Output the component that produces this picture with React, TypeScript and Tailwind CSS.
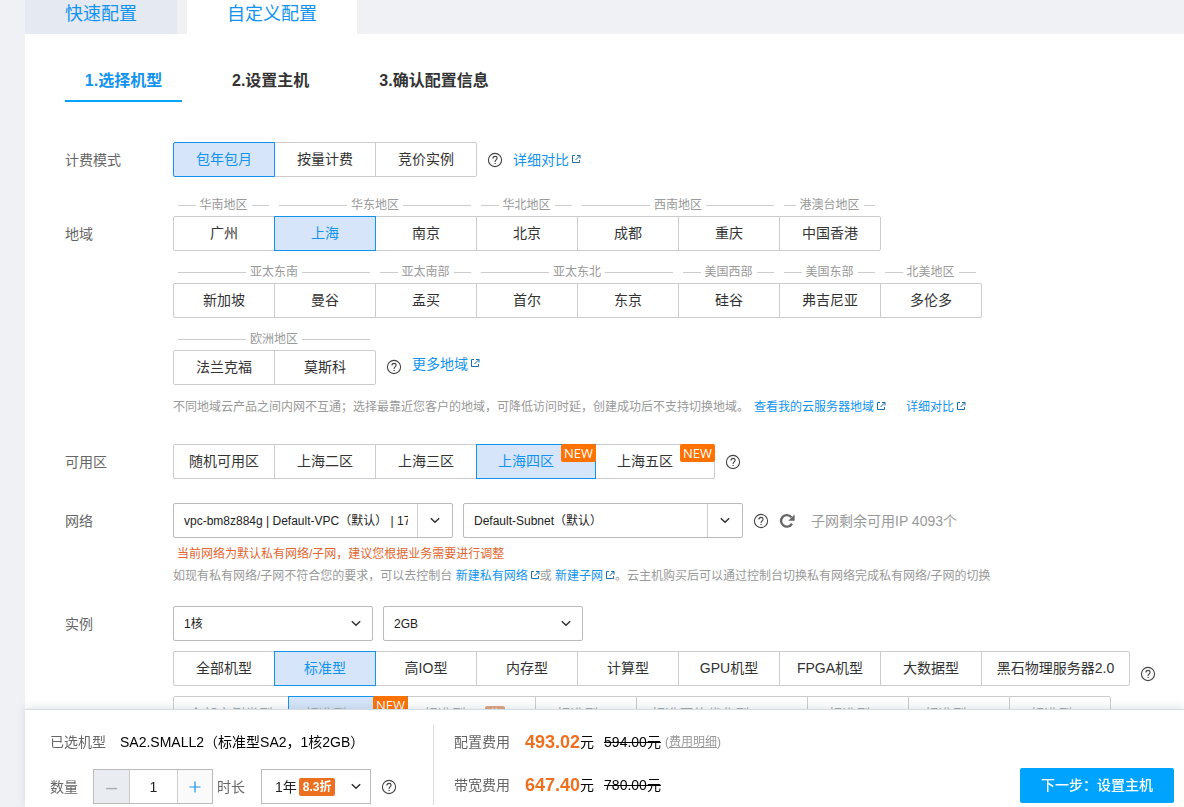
import { clsx } from "clsx";

interface Option {
    name: string;
    badge?: string;
    width?: string;
}

interface Region {
    area: string;
    cities: Array<string>;
}

const regionRows: Array<Array<Region>> = [
    [
        { area: "华南地区", cities: ["广州"] },
        { area: "华东地区", cities: ["上海", "南京"] },
        { area: "华北地区", cities: ["北京"] },
        { area: "西南地区", cities: ["成都", "重庆"] },
        { area: "港澳台地区", cities: ["中国香港"] },
    ],
    [
        { area: "亚太东南", cities: ["新加坡", "曼谷"] },
        { area: "亚太南部", cities: ["孟买"] },
        { area: "亚太东北", cities: ["首尔", "东京"] },
        { area: "美国西部", cities: ["硅谷"] },
        { area: "美国东部", cities: ["弗吉尼亚"] },
        { area: "北美地区", cities: ["多伦多"] },
    ],
    [{ area: "欧洲地区", cities: ["法兰克福", "莫斯科"] }],
];

const payModes: Array<Option> = [{ name: "包年包月" }, { name: "按量计费" }, { name: "竞价实例" }];

const zones: Array<Option> = [
    { name: "随机可用区" },
    { name: "上海二区" },
    { name: "上海三区" },
    { name: "上海四区", badge: "NEW", width: "w-[120px]" },
    { name: "上海五区", badge: "NEW", width: "w-[120px]" },
];

const families: Array<Option> = [
    { name: "全部机型" },
    { name: "标准型" },
    { name: "高IO型" },
    { name: "内存型" },
    { name: "计算型" },
    { name: "GPU机型" },
    { name: "FPGA机型" },
    { name: "大数据型" },
    { name: "黑石物理服务器2.0", width: "w-[149px]" },
];

const models: Array<Option> = [
    { name: "全部实例类型", width: "w-[116px]" },
    { name: "标准型SA2", badge: "NEW", width: "w-[120px]" },
    { name: "标准型S5", badge: "HOT", width: "w-[129px]" },
    { name: "标准型S4" },
    { name: "标准网络优化型SN3ne", width: "w-[172px]" },
    { name: "标准型S3" },
    { name: "标准型SA1" },
    { name: "标准型S2" },
];

const HelpIcon: React.FC = () => (
    <svg className="size-4 shrink-0 text-[#444]" viewBox="0 0 16 16" fill="none" stroke="currentColor" strokeWidth="1.1">
        <circle cx="8" cy="8" r="6.6" />
        <path d="M5.9 6.5c0-1.3.9-2.1 2.1-2.1s2.1.8 2.1 1.9c0 1.5-2 1.7-2 3.2v.4" />
        <path d="M8.1 10.9v1.2" strokeWidth="1.3" />
    </svg>
);

const LinkIcon: React.FC = () => (
    <svg className="mb-[2px] inline-block size-[10px] shrink-0 text-[#1a6fa8]" viewBox="0 0 10 10" fill="none" stroke="currentColor">
        <path d="M4 1.5H1.5v7h7V6M6 1.5h3v3M9 1.5 4.5 6" />
    </svg>
);

const Chevron: React.FC = () => (
    <svg className="pointer-events-none h-[7px] w-[10px] shrink-0 text-[#333]" viewBox="0 0 10 7" fill="none" stroke="currentColor" strokeWidth="1.5">
        <path d="m.8 1.2 4.2 4 4.2-4" />
    </svg>
);

const RefreshIcon: React.FC = () => (
    <svg className="size-4" viewBox="0 0 16 16" fill="none" stroke="#666" strokeWidth="2.3">
        <path d="M13 10.6A5.8 5.8 0 1 1 12.4 4.2" />
        <path d="M15.6 1.4v6.4H9.2z" fill="#666" stroke="none" />
    </svg>
);

const ExternalLink: React.FC<{ text: string }> = ({ text }) => (
    <a href="#" className="inline-flex items-center gap-[2px] whitespace-nowrap text-[#1293ee]">
        {text}
        <LinkIcon />
    </a>
);

interface OptionGroupProps {
    label: string;
    options: Array<Option>;
    active?: string;
    muted?: boolean;
}

const OptionGroup: React.FC<OptionGroupProps> = ({ label, options, active, muted }) => (
    <div role="group" aria-label={label} className="flex">
        {options.map((item) => (
            <button
                key={item.name}
                type="button"
                aria-pressed={item.name === active}
                className={clsx(
                    "relative -ml-px flex h-[35px] shrink-0 items-center border whitespace-nowrap first:ml-0 first:rounded-l-xs last:rounded-r-xs",
                    item.width ?? "w-[102px]",
                    !item.badge && "justify-center",
                    item.badge && (muted ? "pl-4" : "pl-[21px]"),
                    item.name === active ? "z-10 border-[#1293ee] bg-[#d6e5f9]" : "border-[#ccc] bg-white",
                    muted ? "text-[#aaa]" : item.name === active ? "pb-[2px] text-[#1293ee]" : "pb-[2px] text-[#333]"
                )}
            >
                {item.name}
                {item.badge === "NEW" && (
                    <span className="absolute -top-px -right-px rounded-xs bg-[#ff7200] px-[3px] font-['Open_Sans',sans-serif] text-[13px] leading-[18px] text-white">NEW</span>
                )}
                {item.badge === "HOT" && (
                    <span className="ml-[2px] w-5 rounded-xs bg-[#e0a580] text-[10px] leading-4 text-white">热</span>
                )}
            </button>
        ))}
    </div>
);

const RegionRow: React.FC<{ regions: Array<Region> }> = ({ regions }) => (
    <div className="flex">
        {regions.map((region) => (
            <div key={region.area} className="group -ml-px first:ml-0">
                <div className="flex h-[22px] items-center gap-1 pr-[6px] pl-[5px] text-xs text-[#999]">
                    <span className="h-px flex-1 bg-[#ccc]" />
                    {region.area}
                    <span className="h-px flex-1 bg-[#ccc]" />
                </div>
                <div className="flex">
                    {region.cities.map((city) => (
                        <button
                            key={city}
                            type="button"
                            aria-pressed={city === "上海"}
                            className={clsx(
                                "relative -ml-px h-[35px] w-[102px] border pb-[2px] first:ml-0 group-first:first:rounded-l-xs group-last:last:rounded-r-xs",
                                city === "上海" ? "z-10 border-[#1293ee] bg-[#d6e5f9] text-[#1293ee]" : "border-[#ccc] text-[#333]"
                            )}
                        >
                            {city}
                        </button>
                    ))}
                </div>
            </div>
        ))}
    </div>
);

interface SelectBoxProps {
    label: string;
    value: string;
    width: string;
    split?: boolean;
}

const SelectBox: React.FC<SelectBoxProps> = ({ label, value, width, split }) => (
    <div className={clsx("relative flex h-[35px] rounded-xs border border-[#bbb]", width)}>
        <select
            aria-label={label}
            className={clsx("h-full w-full appearance-none bg-transparent pl-[10px] text-xs text-[#222]", split ? "pr-[44px]" : "pr-8")}
        >
            <option>{value}</option>
        </select>
        <span
            className={clsx(
                "pointer-events-none absolute inset-y-0 right-0 flex items-center justify-center",
                split ? "w-[35px] border-l border-[#ccc]" : "w-8"
            )}
        >
            <Chevron />
        </span>
    </div>
);

interface RowProps {
    label: string;
    className?: string;
    labelClass?: string;
    children: React.ReactNode;
}

const Row: React.FC<RowProps> = ({ label, className, labelClass, children }) => (
    <section className={clsx("flex", className)}>
        <h2 className={clsx("w-[108px] shrink-0 leading-[37px] text-[#666]", labelClass)}>{label}</h2>
        <div className="min-w-0 flex-1">{children}</div>
    </section>
);

const App: React.FC = () => {
    return (
        <div className="min-h-screen bg-[#eff1f5] pl-[25px] font-['Liberation_Sans','Noto_Sans_CJK_SC',sans-serif] text-sm text-[#333]">
            <nav className="flex h-[34px] gap-[10px] text-lg leading-7">
                <a href="#" className="w-[152px] bg-[#e4e9f2] text-center text-[#1293ee]">快速配置</a>
                <a href="#" className="w-[170px] bg-white text-center text-[#1293ee]">自定义配置</a>
            </nav>

            <main className="h-[calc(100vh-34px)] overflow-hidden bg-white pl-10">
                <ol className="flex pt-7 text-base leading-[38px] font-bold">
                    <li className="w-[117px] border-b-2 border-[#00a4ff] text-center text-[#1293ee]">1.选择机型</li>
                    <li className="ml-[50px]">2.设置主机</li>
                    <li className="ml-[70px]">3.确认配置信息</li>
                </ol>

                <Row label="计费模式" className="mt-10">
                    <div className="flex items-center">
                        <OptionGroup label="计费模式" options={payModes} active="包年包月" />
                        <span className="mr-[10px] ml-[10px] flex"><HelpIcon /></span>
                        <ExternalLink text="详细对比" />
                    </div>
                </Row>

                <Row label="地域" className="mt-[15px]" labelClass="pt-[22px]">
                    <div className="flex flex-col gap-[10px]">
                        <RegionRow regions={regionRows[0]} />
                        <RegionRow regions={regionRows[1]} />
                        <div className="flex items-end">
                            <RegionRow regions={regionRows[2]} />
                            <span className="mr-[10px] mb-[10px] ml-[10px] flex"><HelpIcon /></span>
                            <span className="mb-[11px] flex"><ExternalLink text="更多地域" /></span>
                        </div>
                    </div>
                    <p className="mt-3 flex text-xs leading-5 text-[#999]">
                        不同地域云产品之间内网不互通；选择最靠近您客户的地域，可降低访问时延，创建成功后不支持切换地域。
                        <span className="mr-5 ml-[5px]"><ExternalLink text="查看我的云服务器地域" /></span>
                        <ExternalLink text="详细对比" />
                    </p>
                </Row>

                <Row label="可用区" className="mt-[27px]">
                    <div className="flex items-center gap-[10px]">
                        <OptionGroup label="可用区" options={zones} active="上海四区" />
                        <HelpIcon />
                    </div>
                </Row>

                <Row label="网络" className="mt-[22px]">
                    <div className="flex items-center gap-[10px]">
                        <SelectBox label="私有网络" value="vpc-bm8z884g | Default-VPC（默认） | 172.17.0.0/16" width="w-[280px]" split />
                        <SelectBox label="子网" value="Default-Subnet（默认）" width="w-[280px]" split />
                        <HelpIcon />
                        <button type="button" aria-label="刷新"><RefreshIcon /></button>
                        <span className="ml-[6px] text-[#999]">子网剩余可用IP 4093个</span>
                    </div>
                    <p className="mt-[5px] pl-1 text-xs leading-[22px] text-[#e1662f]">当前网络为默认私有网络/子网，建议您根据业务需要进行调整</p>
                    <p className="text-xs leading-[22px] text-[#999]">
                        如现有私有网络/子网不符合您的要求，可以去控制台 <ExternalLink text="新建私有网络" />或 <ExternalLink text="新建子网" />
                        。云主机购买后可以通过控制台切换私有网络完成私有网络/子网的切换
                    </p>
                </Row>

                <Row label="实例" className="mt-[19px]">
                    <div className="flex gap-[10px]">
                        <SelectBox label="CPU" value="1核" width="w-[200px]" />
                        <SelectBox label="内存" value="2GB" width="w-[200px]" />
                    </div>
                    <div className="mt-[10px] flex items-end gap-[10px]">
                        <OptionGroup label="机型" options={families} active="标准型" />
                        <span className="mb-1"><HelpIcon /></span>
                    </div>
                    <div className="mt-[10px]">
                        <OptionGroup label="实例类型" options={models} active="标准型SA2" muted />
                    </div>
                </Row>
            </main>

            <footer className="fixed right-0 bottom-0 left-[25px] z-20 flex h-[98px] items-start border-t border-[#d5dde3] bg-white pr-[10px] pl-[25px] shadow-[0_-2px_8px_rgba(60,90,120,0.15)]">
                <div className="w-[383px] shrink-0">
                    <p className="mt-[22px] leading-5 text-black">
                        <span className="mr-[14px] text-[#666]">已选机型</span>SA2.SMALL2（标准型SA2，1核2GB）
                    </p>
                    <div className="mt-[17px] flex items-center text-[#666]">
                        <label htmlFor="count" className="mr-[15px]">数量</label>
                        <div className="flex h-[35px] border border-[#bbb]">
                            <button type="button" aria-label="减少" className="w-[35px] bg-[#e9ecf1] text-xl text-[#aaa]">–</button>
                            <input id="count" defaultValue="1" className="w-[49px] border-x border-[#ccc] text-center text-[#222]" />
                            <button type="button" aria-label="增加" className="flex w-[34px] items-center justify-center bg-[#fafafa] text-[#1293ee]">
                                <svg className="size-3" viewBox="0 0 12 12" fill="none" stroke="currentColor" strokeWidth="1.2">
                                    <path d="M6 .5v11M.5 6h11" />
                                </svg>
                            </button>
                        </div>
                        <span className="mr-4 ml-1">时长</span>
                        <button type="button" aria-label="时长" className="flex h-[35px] w-[110px] items-center border border-[#bbb] pl-[13px] text-[#222]">
                            1年
                            <span className="mr-4 ml-[2px] rounded-xs bg-[#ed7020] px-1 text-xs leading-[18px] font-bold text-white">8.3折</span>
                            <Chevron />
                        </button>
                        <span className="ml-[10px]"><HelpIcon /></span>
                    </div>
                </div>

                <div className="mt-[15px] flex h-[80px] flex-1 flex-col gap-[19px] border-l border-[#ddd] pt-[5px] pl-5">
                    <p className="flex items-center text-black">
                        <span className="mr-[15px] text-[#666]">配置费用</span>
                        <strong className="text-lg leading-6 text-[#ed7020]">493.02</strong>元
                        <del className="mr-1 ml-[10px]">594.00元</del>
                        <span className="text-xs text-[#999]">(<a href="#" className="underline">费用明细</a>)</span>
                    </p>
                    <p className="flex items-center text-black">
                        <span className="mr-[15px] text-[#666]">带宽费用</span>
                        <strong className="text-lg leading-6 text-[#ed7020]">647.40</strong>元
                        <del className="ml-[10px]">780.00元</del>
                    </p>
                </div>

                <button type="button" className="mt-[58px] h-[35px] w-[154px] rounded-xs bg-[#00a4ff] pb-[2px] font-medium text-white">下一步：设置主机</button>
            </footer>
        </div>
    );
};

export default App;
